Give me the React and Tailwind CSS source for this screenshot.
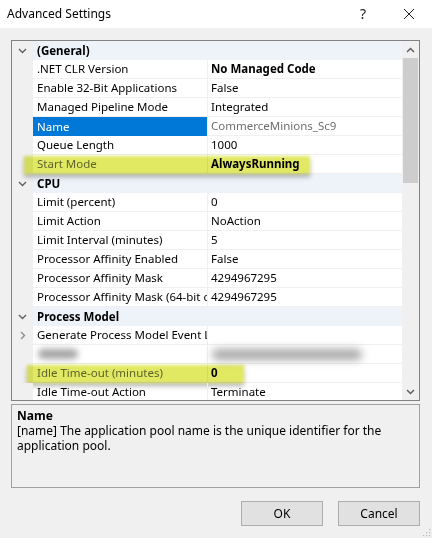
import React from 'react';

const Chevron = ({ open = true }) => (
  <svg width="9" height="9" viewBox="0 0 9 9" className="text-[#606060]">
    {open ? (
      <path d="M1 3 L4.5 6.5 L8 3" fill="none" stroke="currentColor" strokeWidth="1.4" />
    ) : (
      <path d="M3 1 L6.5 4.5 L3 8" fill="none" stroke="currentColor" strokeWidth="1.4" strokeOpacity="0.7" />
    )}
  </svg>
);

const rows = [
  { cat: '(General)' },
  { name: '.NET CLR Version', value: 'No Managed Code', bold: true },
  { name: 'Enable 32-Bit Applications', value: 'False' },
  { name: 'Managed Pipeline Mode', value: 'Integrated' },
  { name: 'Name', value: 'CommerceMinions_Sc9', selected: true },
  { name: 'Queue Length', value: '1000' },
  { name: 'Start Mode', value: 'AlwaysRunning', bold: true, dim: true, hl: 'start' },
  { cat: 'CPU' },
  { name: 'Limit (percent)', value: '0' },
  { name: 'Limit Action', value: 'NoAction' },
  { name: 'Limit Interval (minutes)', value: '5' },
  { name: 'Processor Affinity Enabled', value: 'False' },
  { name: 'Processor Affinity Mask', value: '4294967295' },
  { name: 'Processor Affinity Mask (64-bit c', value: '4294967295' },
  { cat: 'Process Model' },
  { name: 'Generate Process Model Event L', value: '', sub: true },
  { blurred: true },
  { name: 'Idle Time-out (minutes)', value: '0', bold: true, dim: true, hl: 'idle' },
  { name: 'Idle Time-out Action', value: 'Terminate' },
];

function Row({ r }) {
  if (r.cat) {
    return (
      <div className="flex h-[19px] shrink-0 bg-[#eef3f9]">
        <div className="w-[21px] flex items-center justify-center bg-[#f0f0f0]">
          <Chevron />
        </div>
        <div className="flex-1 flex items-center pl-[4px] font-bold text-black">{r.cat}</div>
      </div>
    );
  }
  if (r.blurred) {
    return (
      <div className="flex h-[19px] shrink-0">
        <div className="w-[21px] bg-[#f0f0f0]" />
        <div className="w-[174px] flex items-center pl-[5px] border-b border-[#f0f0f0]">
          <div className="w-[40px] h-[10px] rounded-full bg-[#a4a4a4] blur-[3px]" />
        </div>
        <div className="w-px bg-[#f0f0f0]" />
        <div className="flex-1 flex items-center pl-[4px] border-b border-[#f0f0f0]">
          <div className="w-[150px] h-[11px] rounded-full bg-[#a8a8a8] blur-[4px]" />
        </div>
      </div>
    );
  }
  return (
    <div className="relative flex h-[19px] shrink-0">
      <div className="w-[21px] flex items-center justify-center bg-[#f0f0f0]">
        {r.sub && <Chevron open={false} />}
      </div>
      <div
        className={
          'w-[174px] flex items-center pl-[4px] overflow-hidden whitespace-nowrap ' +
          (r.selected ? 'bg-[#0078d7] text-white' : 'border-b border-[#f0f0f0] ' + (r.dim ? 'text-[#6d6d6d]' : 'text-black'))
        }
      >
        {r.name}
      </div>
      <div className="w-px bg-[#f0f0f0]" />
      <div
        className={
          'flex-1 flex items-center pl-[3px] whitespace-nowrap border-b border-[#f0f0f0] ' +
          (r.bold ? 'font-bold ' : '') +
          (r.selected ? 'text-[#6d6d6d]' : 'text-black')
        }
      >
        {r.value}
      </div>
      {r.hl === 'start' && (
        <div className="absolute left-[12px] top-[1px] w-[286px] h-[18px] bg-[#e1e963] mix-blend-multiply blur-[1.5px] shadow-[0_3px_4px_rgba(0,0,0,0.3)]" />
      )}
      {r.hl === 'idle' && (
        <div className="absolute left-[15px] top-[1px] w-[217px] h-[18px] bg-[#e1e963] mix-blend-multiply blur-[1.5px] shadow-[0_3px_4px_rgba(0,0,0,0.3)]" />
      )}
    </div>
  );
}

export default function App() {
  return (
    <div className="relative w-[432px] h-[538px] bg-[#f0f0f0] flex flex-col text-[11.5px] leading-none text-black font-['Segoe_UI','Noto_Sans',sans-serif] overflow-hidden">
      {/* Title bar */}
      <div className="h-[28px] bg-white flex items-center shrink-0 text-[12px]">
        <div className="pl-[7px] flex-1">Advanced Settings</div>
        <div className="w-[46px] flex justify-center text-[14px] text-[#202020]">?</div>
        <div className="w-[46px] flex justify-center">
          <svg width="12" height="12" viewBox="0 0 12 12">
            <path d="M1 1 L11 11 M11 1 L1 11" stroke="#202020" strokeWidth="1" />
          </svg>
        </div>
      </div>

      <div className="flex flex-col px-[11px] pt-[12px] pr-[12px]">
        {/* Property grid */}
        <div className="h-[361px] border border-[#828282] bg-white flex overflow-hidden">
          <div className="flex-1 flex flex-col overflow-hidden">
            {rows.map((r, i) => (
              <Row key={i} r={r} />
            ))}
          </div>
          <div className="w-[17px] bg-[#f0f0f0] flex flex-col">
            <div className="h-[17px] flex items-center justify-center">
              <svg width="9" height="6" viewBox="0 0 9 6">
                <path d="M1 5 L4.5 1.5 L8 5" fill="none" stroke="#606060" strokeWidth="1.5" />
              </svg>
            </div>
            <div className="mx-[1px] h-[125px] bg-[#cdcdcd]" />
            <div className="flex-1" />
            <div className="h-[17px] flex items-center justify-center">
              <svg width="9" height="6" viewBox="0 0 9 6">
                <path d="M1 1 L4.5 4.5 L8 1" fill="none" stroke="#606060" strokeWidth="1.5" />
              </svg>
            </div>
          </div>
        </div>

        {/* Description pane */}
        <div className="mt-[3px] h-[84px] border border-[#a0a0a0] px-[5px] pt-[3px] leading-[15px] text-[12px]">
          <div className="font-bold">Name</div>
          <div>[name] The application pool name is the unique identifier for the application pool.</div>
        </div>

        {/* Buttons */}
        <div className="flex justify-end gap-[15px] mt-[13px]">
          <button className="w-[82px] h-[25px] bg-[#e1e1e1] border border-[#adadad] text-black text-[12px]">OK</button>
          <button className="w-[82px] h-[25px] bg-[#e1e1e1] border border-[#adadad] text-black text-[12px]">Cancel</button>
        </div>
      </div>

      {/* Size grip */}
      <svg className="absolute right-[1px] bottom-[1px]" width="10" height="10" viewBox="0 0 10 10">
        <rect x="8" y="2" width="1.2" height="1.2" fill="#b8b8b8" />
        <rect x="5" y="5" width="1.2" height="1.2" fill="#b8b8b8" />
        <rect x="8" y="5" width="1.2" height="1.2" fill="#b8b8b8" />
        <rect x="2" y="8" width="1.2" height="1.2" fill="#b8b8b8" />
        <rect x="5" y="8" width="1.2" height="1.2" fill="#b8b8b8" />
        <rect x="8" y="8" width="1.2" height="1.2" fill="#b8b8b8" />
      </svg>
    </div>
  );
}
